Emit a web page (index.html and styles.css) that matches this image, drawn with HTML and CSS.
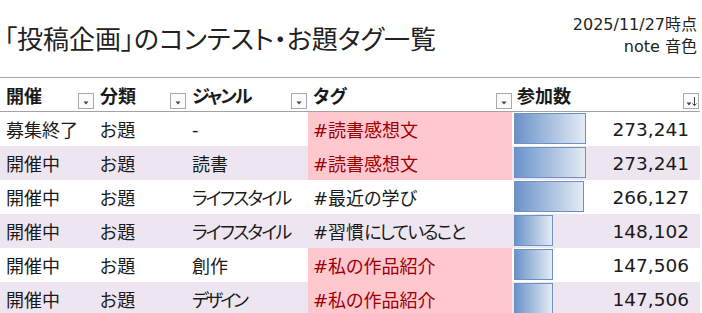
FILE: index.html
```html
<!DOCTYPE html>
<html lang="ja">
<head>
<meta charset="utf-8">
<link rel="stylesheet" href="styles.css">
</head>
<body>
<div class="page">
  <header class="top">
    <h1 class="title">「投稿企画」のコンテスト・お題タグ一覧</h1>
    <div class="meta">
      <div>2025/11/27時点</div>
      <div>note 音色</div>
    </div>
  </header>
  <div class="table">
    <div class="row head">
      <div class="cell"><span>開催</span><span class="btn"><svg viewBox="0 0 14 14" width="14" height="14"><path d="M4.5 7.5h5l-2.5 3z" fill="#444"/></svg></span></div>
      <div class="cell"><span>分類</span><span class="btn"><svg viewBox="0 0 14 14" width="14" height="14"><path d="M4.5 7.5h5l-2.5 3z" fill="#444"/></svg></span></div>
      <div class="cell"><span class="kn">ジャンル</span><span class="btn"><svg viewBox="0 0 14 14" width="14" height="14"><path d="M4.5 7.5h5l-2.5 3z" fill="#444"/></svg></span></div>
      <div class="cell"><span>タグ</span><span class="btn"><svg viewBox="0 0 14 14" width="14" height="14"><path d="M4.5 7.5h5l-2.5 3z" fill="#444"/></svg></span></div>
      <div class="cell"><span>参加数</span><span class="btn"><svg viewBox="0 0 14 14" width="14" height="14"><path d="M2.5 8.5h5l-2.5 3z" fill="#444"/><path d="M10.5 3v8.5" stroke="#444" stroke-width="1"/><path d="M8.5 9.5l2 2.2 2-2.2" fill="none" stroke="#444" stroke-width="1"/></svg></span></div>
    </div>
    <div class="row">
      <div class="cell">募集終了</div><div class="cell">お題</div><div class="cell">-</div>
      <div class="cell tag hot">#読書感想文</div>
      <div class="cell num"><span class="bar" style="width:72px"></span><span class="val">273,241</span></div>
    </div>
    <div class="row alt">
      <div class="cell">開催中</div><div class="cell">お題</div><div class="cell">読書</div>
      <div class="cell tag hot">#読書感想文</div>
      <div class="cell num"><span class="bar" style="width:72px"></span><span class="val">273,241</span></div>
    </div>
    <div class="row">
      <div class="cell">開催中</div><div class="cell">お題</div><div class="cell"><span class="kn">ライフスタイル</span></div>
      <div class="cell tag">#最近の学び</div>
      <div class="cell num"><span class="bar" style="width:70px"></span><span class="val">266,127</span></div>
    </div>
    <div class="row alt">
      <div class="cell">開催中</div><div class="cell">お題</div><div class="cell"><span class="kn">ライフスタイル</span></div>
      <div class="cell tag">#習慣<span class="kn">にしていること</span></div>
      <div class="cell num"><span class="bar" style="width:39px"></span><span class="val">148,102</span></div>
    </div>
    <div class="row">
      <div class="cell">開催中</div><div class="cell">お題</div><div class="cell">創作</div>
      <div class="cell tag hot">#私の作品紹介</div>
      <div class="cell num"><span class="bar" style="width:39px"></span><span class="val">147,506</span></div>
    </div>
    <div class="row alt">
      <div class="cell">開催中</div><div class="cell">お題</div><div class="cell"><span class="kn kn2">デザイン</span></div>
      <div class="cell tag hot">#私の作品紹介</div>
      <div class="cell num"><span class="bar" style="width:39px"></span><span class="val">147,506</span></div>
    </div>
  </div>
</div>
</body>
</html>
```
FILE: styles.css
```css
html, body {
  margin: 0;
  padding: 0;
  background: #ffffff;
}
body {
  font-family: "DejaVu Sans", "Noto Sans CJK JP", sans-serif;
  font-feature-settings: "palt";
  color: #1a1a1a;
  width: 702px;
  height: 313px;
  overflow: hidden;
}
.page {
  width: 702px;
}
.top {
  display: flex;
  justify-content: space-between;
  height: 77px;
}
.title {
  margin: 0;
  padding: 22px 0 0 4px;
  font-family: "Noto Sans CJK JP", sans-serif;
  font-weight: 400;
  font-size: 26px;
  line-height: 32px;
  color: #222;
}
.meta {
  padding: 14px 5px 0 0;
  text-align: right;
  font-size: 16px;
  line-height: 22px;
  color: #222;
}
.table {
  width: 700px;
}
.row {
  display: grid;
  grid-template-columns: 95px 92px 121px 205px 187px;
  height: 34px;
  font-size: 18px;
}
.row.alt {
  background: #ede6f1;
}
.row.head {
  height: 33px;
  border-top: 1px solid #b49cc6;
  border-bottom: 1px solid #a3a3a3;
  font-weight: 700;
  background: #ffffff;
}
.cell {
  display: flex;
  align-items: center;
  padding-left: 5px;
  white-space: nowrap;
}
.row .cell:first-child {
  padding-left: 6px;
}
.kn {
  letter-spacing: -1.8px;
}
.kn2 {
  letter-spacing: -3px;
}
.head .cell {
  justify-content: space-between;
  padding-right: 1px;
}
.head .cell:last-child {
  padding-left: 4px;
}
.btn {
  align-self: flex-end;
  margin-bottom: 2px;
  width: 14px;
  height: 14px;
  border: 1px solid #a9a9a9;
  background: #fbfbfb;
  display: flex;
}
.btn svg {
  width: 14px;
  height: 14px;
}
.tag {
  padding-left: 5px;
  margin-right: 1px;
}
.tag.hot {
  background: #ffc7ce;
  color: #9c0006;
}
.num {
  padding-left: 1px;
  align-items: stretch;
}
.bar {
  display: block;
  margin: 1px 0 2px 0;
  box-sizing: border-box;
  border: 1px solid #6f90c2;
  background: linear-gradient(to right, #6a93c9, #e4ebf5);
}
.val {
  margin-left: auto;
  padding-right: 11px;
  display: flex;
  align-items: center;
  font-size: 18.5px;
  color: #1a1a1a;
}
```
